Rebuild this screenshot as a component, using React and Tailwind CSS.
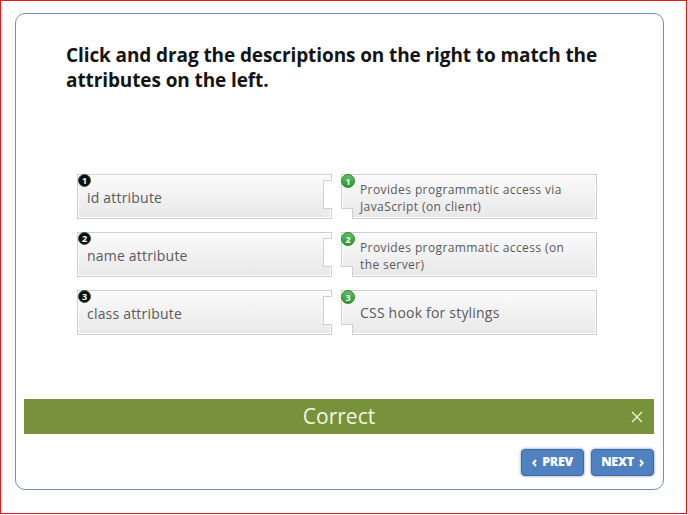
import React from "react";

const F = { fontFamily: '"Open Sans", "Liberation Sans", sans-serif' };

function LeftBadge({ n }) {
  return (
    <div className="absolute left-[0px] top-[-1px] w-[13px] h-[13px] rounded-full bg-[#0d0d0d] border border-[#2d5a2d] flex items-center justify-center text-white text-[9px] font-bold leading-none">
      {n}
    </div>
  );
}

function RightBadge({ n }) {
  return (
    <div className="absolute left-[-1px] top-[-1px] w-[14px] h-[14px] rounded-full bg-gradient-to-b from-[#5cc05c] to-[#2f962f] border border-[#2a8a2a] flex items-center justify-center text-white text-[9px] font-bold leading-none">
      {n}
    </div>
  );
}

function Row({ n, left, right, small }) {
  return (
    <div className="flex h-[45px] ml-[61px] gap-[9px]">
      <div className="relative w-[255px] h-[45px] border border-[#cfcfcf] bg-gradient-to-b from-[#fbfbfb] to-[#e8e8e8] shadow-[inset_0_0_0_1px_#ffffff] flex items-center pl-[9px] pt-[2px]">
        <LeftBadge n={n} />
        <span className="text-[14px] text-[#5a5a5a] tracking-[0.2px]" style={F}>{left}</span>
        <div className="absolute right-[-1px] top-[5px] w-[9px] h-[29px] bg-white border-t border-l border-b border-[#cfcfcf]" />
      </div>
      <div
        className={
          "relative w-[256px] h-[45px] border border-[#cfcfcf] bg-gradient-to-b from-[#fbfbfb] to-[#e8e8e8] shadow-[inset_0_0_0_1px_#ffffff] flex items-center pl-[18px] " +
          (small ? "pt-[3px]" : "pt-[0px]")
        }
      >
        <RightBadge n={n} />
        <span
          className={small ? "text-[12px] leading-[17px] text-[#5a5a5a] tracking-[0.4px]" : "text-[14px] text-[#5a5a5a] tracking-[0.2px]"}
          style={F}
        >
          {right}
        </span>
        <div className="absolute left-[-1px] bottom-[-1px] w-[12px] h-[11px] bg-white border-t border-r border-[#cfcfcf]" />
      </div>
    </div>
  );
}

function Btn({ children }) {
  return (
    <div
      className="w-[63px] h-[27px] rounded-[4px] bg-[#4f80c0] border border-[#3f6ba6] shadow-[0_0_2px_1px_rgba(60,90,140,0.35)] flex items-center justify-center gap-[5px] text-white text-[12.5px] font-extrabold tracking-[-0.3px]"
      style={F}
    >
      {children}
    </div>
  );
}

export default function App() {
  return (
    <div className="w-[688px] h-[515px] bg-white">
      <div className="w-[687px] h-[514px] border border-[#e0191b] pt-[12px] pl-[14px]">
        <div className="w-[649px] h-[477px] border border-[#7290b4] rounded-[10px] flex flex-col">
          <div
            className="ml-[50px] mt-[29px] w-[570px] text-[19px] leading-[25px] font-bold text-[#141414] tracking-[-0.1px]"
            style={F}
          >
            Click and drag the descriptions on the right to match the attributes on the left.
          </div>
          <div className="mt-[81px] flex flex-col gap-[13px]">
            <Row n="1" left="id attribute" right={<>Provides programmatic access via<br />JavaScript (on client)</>} small />
            <Row n="2" left="name attribute" right={<>Provides programmatic access (on<br />the server)</>} small />
            <Row n="3" left="class attribute" right="CSS hook for stylings" />
          </div>
          <div className="mt-[64px] ml-[8px] w-[630px] h-[35px] bg-[#78923b] flex items-center justify-center relative">
            <span className="text-[21px] text-[#f3f7e6]" style={F}>Correct</span>
            <svg className="absolute right-[11px] top-[12px]" width="12" height="12" viewBox="0 0 12 12">
              <path d="M1 1 L11 11 M11 1 L1 11" stroke="#eef2e0" strokeWidth="1.3" fill="none" />
            </svg>
          </div>
          <div className="mt-[15px] flex justify-end gap-[7px] pr-[9px]">
            <Btn>
              <svg width="5" height="8" viewBox="0 0 5 8"><path d="M4 1 L1.3 4 L4 7" stroke="white" strokeWidth="2" fill="none" /></svg>
              <span>PREV</span>
            </Btn>
            <Btn>
              <span>NEXT</span>
              <svg width="5" height="8" viewBox="0 0 5 8"><path d="M1 1 L3.7 4 L1 7" stroke="white" strokeWidth="2" fill="none" /></svg>
            </Btn>
          </div>
        </div>
      </div>
    </div>
  );
}
